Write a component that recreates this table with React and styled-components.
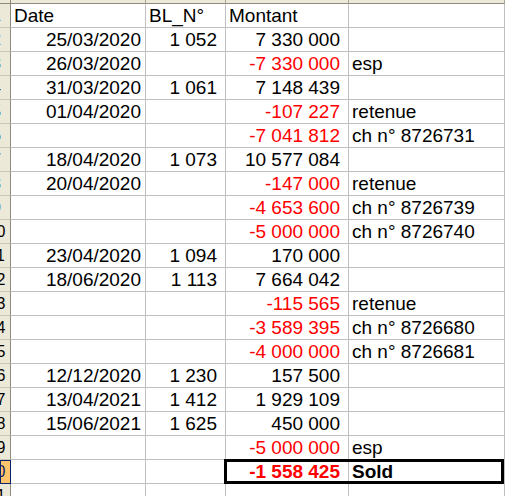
import React from 'react';
import styled, { createGlobalStyle, css } from 'styled-components';

const GlobalStyle = createGlobalStyle`
  html, body {
    margin: 0;
    padding: 0;
    background: #fff;
    overflow: hidden;
  }
  body {
    font-family: "Liberation Sans", Arial, sans-serif;
  }
`;

const Sheet = styled.div`
  display: grid;
  grid-template-columns: 11px 135px 80px 123px 1fr;
  grid-template-rows: 4px repeat(21, 24px);
  width: 505px;
  height: 496px;
  overflow: hidden;
  background: #fff;
`;

const ColHead = styled.div`
  box-sizing: border-box;
  background: #ece9d8;
  border-right: 1px solid ${p => (p.$corner ? '#8e8a7c' : '#aca899')};
  border-bottom: 1px solid #8e8a7c;
`;

const RowHead = styled.div`
  box-sizing: border-box;
  display: flex;
  justify-content: flex-end;
  align-items: flex-end;
  overflow: hidden;
  background: ${p => (p.$active ? '#ffc56c' : '#ece9d8')};
  border-right: 1px solid ${p => (p.$active ? '#0a246a' : '#8e8a7c')};
  border-bottom: 1px solid ${p => (p.$active ? '#0a246a' : '#cbc7b8')};
  border-left: ${p => (p.$active ? '1px solid #0a246a' : 'none')};
  border-top: ${p => (p.$active ? '1px solid #0a246a' : 'none')};
`;

const RowNum = styled.span`
  flex-shrink: 0;
  width: 27px;
  text-align: center;
  font-size: 16px;
  line-height: 1;
  padding-bottom: 3px;
  color: ${p => (p.$active ? '#0a246a' : '#000')};
`;

// thick outline drawn over the gridlines around the total (C20:D20)
const boxEdge = css`
  position: relative;
  &::after {
    content: '';
    position: absolute;
    top: -1px;
    bottom: -1px;
    left: ${p => (p.$box === 'left' ? '-2px' : '-1px')};
    right: 0;
    border-top: 3px solid #000;
    border-bottom: 3px solid #000;
    border-left: ${p => (p.$box === 'left' ? '3px solid #000' : 'none')};
    border-right: ${p => (p.$box === 'right' ? '3px solid #000' : 'none')};
    pointer-events: none;
  }
`;

const Cell = styled.div`
  box-sizing: border-box;
  display: flex;
  align-items: flex-end;
  justify-content: ${p => (p.$right ? 'flex-end' : 'flex-start')};
  padding: 0 ${p => p.$padR ?? 3}px 2px ${p => (p.$right ? 0 : 3)}px;
  border-right: 1px solid #c0c0c0;
  border-bottom: 1px solid #c0c0c0;
  font-size: 19px;
  line-height: 1;
  white-space: nowrap;
  color: ${p => (p.$neg ? '#ff0000' : '#000')};
  font-weight: ${p => (p.$bold ? 700 : 400)};
  ${p => p.$box && boxEdge}
`;

const rows = [
  { date: 'Date', bl: 'BL_N°', amount: 'Montant', head: true },
  { date: '25/03/2020', bl: '1 052', amount: '7 330 000' },
  { date: '26/03/2020', amount: '-7 330 000', note: 'esp' },
  { date: '31/03/2020', bl: '1 061', amount: '7 148 439' },
  { date: '01/04/2020', amount: '-107 227', note: 'retenue' },
  { amount: '-7 041 812', note: 'ch n° 8726731' },
  { date: '18/04/2020', bl: '1 073', amount: '10 577 084' },
  { date: '20/04/2020', amount: '-147 000', note: 'retenue' },
  { amount: '-4 653 600', note: 'ch n° 8726739' },
  { amount: '-5 000 000', note: 'ch n° 8726740' },
  { date: '23/04/2020', bl: '1 094', amount: '170 000' },
  { date: '18/06/2020', bl: '1 113', amount: '7 664 042' },
  { amount: '-115 565', note: 'retenue' },
  { amount: '-3 589 395', note: 'ch n° 8726680' },
  { amount: '-4 000 000', note: 'ch n° 8726681' },
  { date: '12/12/2020', bl: '1 230', amount: '157 500' },
  { date: '13/04/2021', bl: '1 412', amount: '1 929 109' },
  { date: '15/06/2021', bl: '1 625', amount: '450 000' },
  { amount: '-5 000 000', note: 'esp' },
  { amount: '-1 558 425', note: 'Sold', total: true },
  {},
];

export default function App() {
  return (
    <>
      <GlobalStyle />
      <Sheet>
        <ColHead $corner />
        <ColHead />
        <ColHead />
        <ColHead />
        <ColHead />

        {rows.map((r, i) => {
          const neg = r.amount && r.amount.startsWith('-');
          return (
            <React.Fragment key={i}>
              <RowHead $active={r.total}>
                <RowNum $active={r.total}>{i + 1}</RowNum>
              </RowHead>
              <Cell $right={!r.head} $padR={4}>{r.date}</Cell>
              <Cell $right={!r.head} $padR={8}>{r.bl}</Cell>
              <Cell
                $right={!r.head}
                $padR={8}
                $neg={neg}
                $bold={r.total}
                $box={r.total && 'left'}
              >
                {r.amount}
              </Cell>
              <Cell $bold={r.total} $box={r.total && 'right'}>
                {r.note}
              </Cell>
            </React.Fragment>
          );
        })}
      </Sheet>
    </>
  );
}
